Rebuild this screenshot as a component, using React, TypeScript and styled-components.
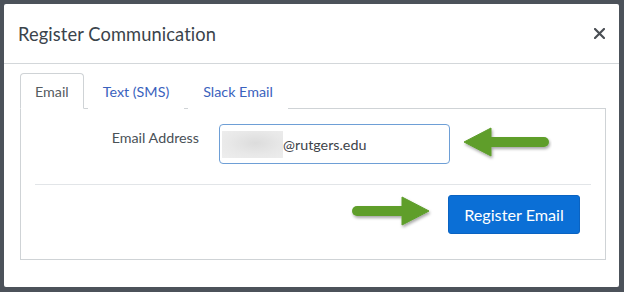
import React from "react";
import styled, { createGlobalStyle } from "styled-components";

const GlobalStyle = createGlobalStyle`
  html, body {
    margin: 0;
    padding: 0;
    background: #4c525a;
  }
  body {
    font-family: Lato, "Open Sans", "Liberation Sans", sans-serif;
  }
`;

const Page = styled.div`
  box-sizing: border-box;
  width: 624px;
  height: 292px;
  padding: 4px 5px 5px 4px;
  display: flex;
`;

const Dialog = styled.div`
  flex: 1;
  display: flex;
  flex-direction: column;
  background: #ffffff;
  border-radius: 2px;
`;

const Header = styled.div`
  box-sizing: border-box;
  height: 60px;
  display: flex;
  align-items: center;
  justify-content: space-between;
  padding: 0 14px 0 14px;
  border-bottom: 1px solid #d3d7da;
`;

const Title = styled.h2`
  margin: 0;
  font-size: 18.3px;
  font-weight: 400;
  color: #3a434b;
  letter-spacing: 0.1px;
`;

const CloseButton = styled.button`
  border: none;
  background: none;
  padding: 0;
  width: 12px;
  height: 12px;
  display: flex;
  align-items: center;
  justify-content: center;
  cursor: pointer;
`;

const Body = styled.div`
  padding: 9px 13px 0 16px;
`;

const TabList = styled.div`
  display: flex;
  margin-bottom: -1px;
  position: relative;
`;

const Tab = styled.div<{ $active?: boolean }>`
  box-sizing: border-box;
  height: 36px;
  padding: 0 14px;
  margin-right: 4px;
  display: flex;
  align-items: center;
  font-size: 14.3px;
  color: ${(p) => (p.$active ? "#555b61" : "#3a62bd")};
  border: 1px solid ${(p) => (p.$active ? "#cfd3d6" : "transparent")};
  border-bottom-color: ${(p) => (p.$active ? "#ffffff" : "transparent")};
  border-radius: 4px 4px 0 0;
  background: #ffffff;
`;

const Panel = styled.div`
  border: 1px solid #cfd3d6;
  padding: 15px 14px 25px;
`;

const FieldRow = styled.div`
  display: flex;
  align-items: flex-start;
`;

const Label = styled.label`
  width: 164px;
  text-align: right;
  font-size: 14.3px;
  line-height: 20px;
  margin-top: 4px;
  color: #4a5157;
  margin-right: 20px;
`;

const InputBox = styled.div`
  box-sizing: border-box;
  width: 231px;
  height: 40px;
  border: 1px solid #6e9fd6;
  border-radius: 4px;
  display: flex;
  align-items: center;
  padding: 0 2px;
`;

const Blurred = styled.span`
  width: 61px;
  height: 27px;
  background: radial-gradient(ellipse at 55% 45%, #dcdcdc 0%, #e8e8e8 55%, #eeeeee 100%);
`;

const InputText = styled.span`
  font-size: 14.3px;
  color: #3d4349;
`;

const Arrow = styled.svg<{ $gap: number; $side: "left" | "right" }>`
  display: block;
  flex: none;
  ${(p) => (p.$side === "left" ? `margin-left: ${p.$gap}px;` : `margin-right: ${p.$gap}px;`)}
`;

const Separator = styled.hr`
  margin: 20px 0 0;
  border: none;
  border-top: 1px solid #e2e5e8;
`;

const Footer = styled.div`
  display: flex;
  justify-content: flex-end;
  align-items: center;
  margin-top: 10px;
  padding-right: 11px;
`;

const PrimaryButton = styled.button`
  box-sizing: border-box;
  width: 132px;
  height: 39px;
  border: 1px solid #0a63c2;
  border-radius: 3px;
  background: #0b6fd6;
  color: #ffffff;
  font-family: Lato, "Open Sans", "Liberation Sans", sans-serif;
  font-size: 16.2px;
  cursor: pointer;
`;

const GreenArrow: React.FC<{ dir: "left" | "right"; gap: number; dy?: number }> = ({
  dir,
  gap,
  dy = 0,
}) => {
  const id = `shadow-${dir}`;
  return (
    <Arrow
      $gap={gap}
      $side={dir === "left" ? "left" : "right"}
      width="90"
      height="36"
      viewBox="0 0 90 36"
      style={{ marginTop: dy }}
    >
      <defs>
        <filter id={id} x="-10%" y="-20%" width="130%" height="160%">
          <feDropShadow dx="1" dy="2" stdDeviation="1.4" floodColor="#000" floodOpacity="0.35" />
        </filter>
      </defs>
      <g filter={`url(#${id})`} fill="#5e9e2b" stroke="#5e9e2b">
        {dir === "left" ? (
          <>
            <line x1="28" y1="16" x2="82" y2="16" strokeWidth="10" strokeLinecap="round" />
            <polygon points="2,16 29,2 29,30" strokeWidth="1" strokeLinejoin="round" />
          </>
        ) : (
          <>
            <line x1="12" y1="16" x2="60" y2="16" strokeWidth="10" strokeLinecap="round" />
            <polygon points="84,16 57,2 57,30" strokeWidth="1" strokeLinejoin="round" />
          </>
        )}
      </g>
    </Arrow>
  );
};

export default function App() {
  return (
    <>
      <GlobalStyle />
      <Page>
        <Dialog>
          <Header>
            <Title>Register Communication</Title>
            <CloseButton aria-label="Close">
              <svg width="11" height="11" viewBox="0 0 11 11">
                <path d="M1 1 L10 10 M10 1 L1 10" stroke="#4a4f54" strokeWidth="2.2" strokeLinecap="round" />
              </svg>
            </CloseButton>
          </Header>
          <Body>
            <TabList>
              <Tab $active>Email</Tab>
              <Tab>Text (SMS)</Tab>
              <Tab>Slack Email</Tab>
            </TabList>
            <Panel>
              <FieldRow>
                <Label>Email Address</Label>
                <InputBox>
                  <Blurred />
                  <InputText>@rutgers.edu</InputText>
                </InputBox>
                <GreenArrow dir="left" gap={12} dy={2} />
              </FieldRow>
              <Separator />
              <Footer>
                <GreenArrow dir="right" gap={13} dy={-4} />
                <PrimaryButton>Register Email</PrimaryButton>
              </Footer>
            </Panel>
          </Body>
        </Dialog>
      </Page>
    </>
  );
}
